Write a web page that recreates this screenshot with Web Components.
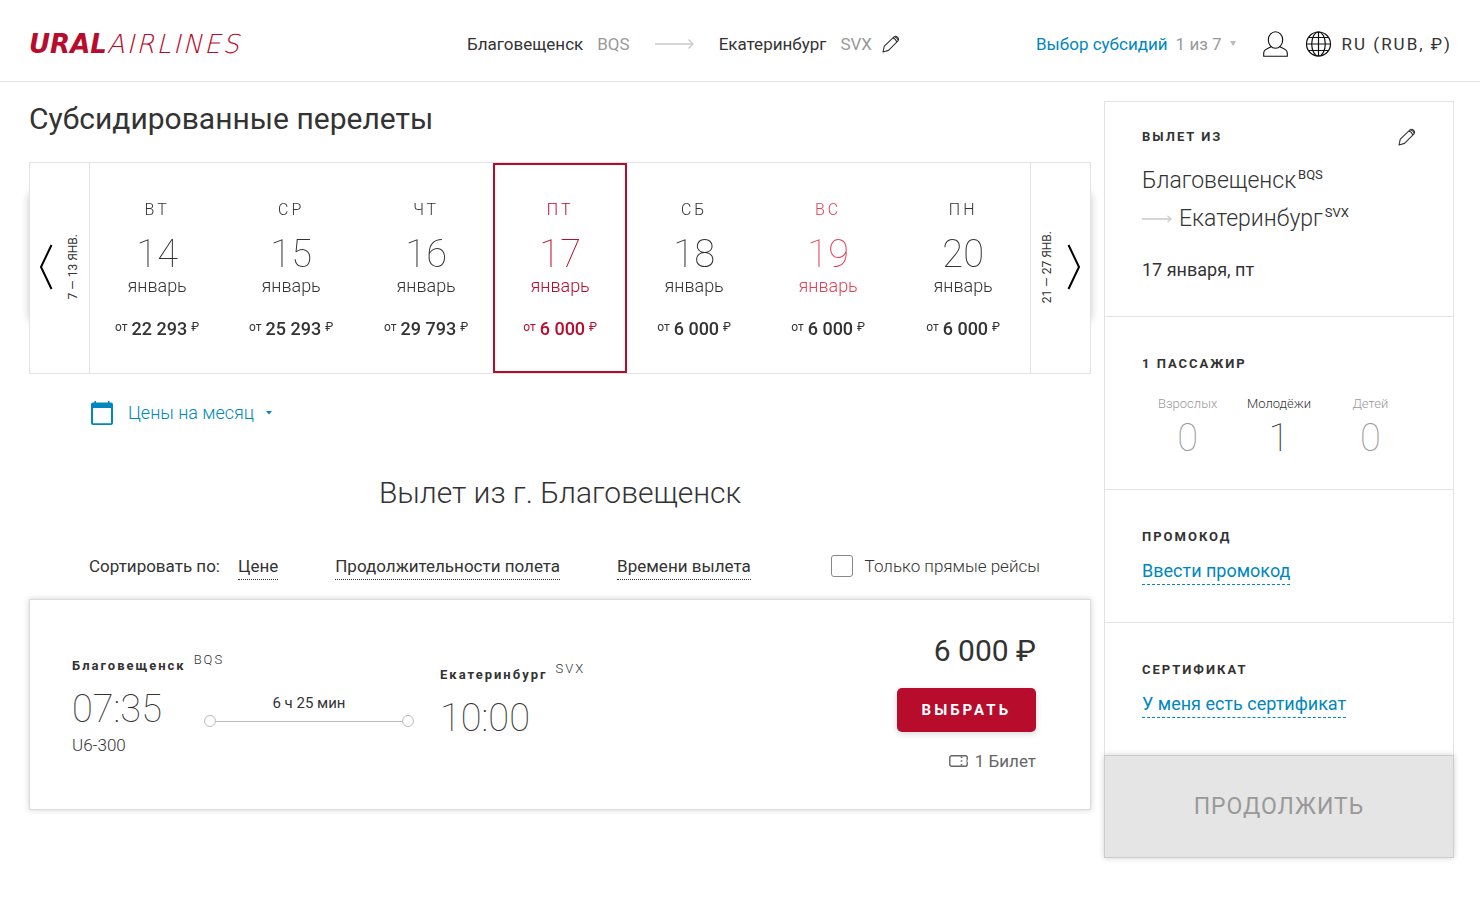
<!DOCTYPE html>
<html lang="ru">
<head>
<meta charset="utf-8">
<meta name="viewport" content="width=device-width, initial-scale=1">
<title>Субсидированные перелеты — Ural Airlines</title>
<style>
  :root {
    --ink: #333;
    --muted: #999;
    --line: #e3e3e3;
    --brand: #b80c2d;
    --holiday: #e04358;
    --link: #0087be;
  }
  body { margin: 0; background: #fff; color: var(--ink); font: 400 18px/24px Roboto, "Liberation Sans", sans-serif; }
</style>
</head>
<body>
<ua-booking-page></ua-booking-page>

<script>
const BASE = `
  *, *::before, *::after { box-sizing: border-box; }
  button { font: inherit; color: inherit; letter-spacing: inherit; background: none; border: 0; padding: 0; margin: 0; cursor: pointer; text-align: inherit; }
  a { color: inherit; text-decoration: none; }
  h1, h2, h3, p { margin: 0; font-weight: inherit; font-size: inherit; }
`;

function define(name, css, html) {
  customElements.define(name, class extends HTMLElement {
    constructor() {
      super();
      const root = this.attachShadow({ mode: 'open' });
      const markup = typeof html === 'function' ? html(this) : html;
      root.innerHTML = `<style>${BASE}${css}</style>${markup}`;
    }
  });
}

const ICONS = {
  pencil: [18, 18, `<g fill="none" stroke="#333" stroke-width="1.1" stroke-linejoin="round"><path d="M1 17 2.3 11.2 12 1.9Q13.3.6 15 1.8L16.1 2.9Q17.2 4.4 16 5.9L6.5 15.4Z"/><path d="M11 3Q13.6 3.6 14.8 7"/><path d="M12.4 1.7Q15 2.3 16.3 5.4"/></g>`],
  arrow: [39, 12, `<g fill="none" stroke="#c8c8c8"><path stroke-width="1.6" d="M0 6H38"/><path stroke-width="1.3" d="M33.5 1.5 38 6 33.5 10.5"/></g>`],
  arrowSmall: [30, 10, `<g fill="none" stroke="#ccc"><path stroke-width="1.6" d="M0 5H29"/><path stroke-width="1.2" d="M25.5 1.8 29 5 25.5 8.2"/></g>`],
  user: [25, 26, `<g fill="none" stroke="#111" stroke-width="1.1"><ellipse cx="12.5" cy="9" rx="7.2" ry="8.2"/><path d="M8.3 15.8C4.5 17.8.7 18.2.7 22V25.2H24.3V22C24.3 18.2 20.5 17.8 16.7 15.8"/></g>`],
  globe: [25, 26, `<g fill="none" stroke="#111" stroke-width="1.2"><circle cx="12.5" cy="13" r="12"/><ellipse cx="12.5" cy="13" rx="6.8" ry="12"/><path d="M12.5 1V25M.5 13H24.5M2.8 6.5H22.2M2.8 19.5H22.2"/></g>`],
  prev: [14, 46, `<path d="M12.5 1 2 23 12.5 45" fill="none" stroke="#000" stroke-width="2"/>`],
  next: [14, 46, `<path d="M1.5 1 12 23 1.5 45" fill="none" stroke="#000" stroke-width="2"/>`],
  calendar: [22, 24, `<path fill="#0087be" d="M3.5 0H5V1.5H17V0H18.5V1.5H20Q22 1.5 22 3.5V22Q22 24 20 24H2Q0 24 0 22V3.5Q0 1.5 2 1.5H3.5ZM2 7V22.3H20V7Z"/>`],
  caretBlue: [6, 4, `<path fill="#0087be" d="M0 0H6L3 3.5Z"/>`],
  caretGray: [6, 6, `<path fill="#bbb" d="M0 0H6L3 5Z"/>`],
  ticket: [19, 12, `<rect x=".8" y=".8" width="17.4" height="10.4" rx="1.8" fill="none" stroke="#666" stroke-width="1.4"/><path stroke="#666" stroke-width="1.6" d="M12.5 1.500V3M12.5 5.200V6.800M12.5 9V10.500"/><path fill="#fff" d="M17 4.8H19V7.2H17Z"/><path fill="none" stroke="#666" d="M18.5 4.5Q16.8 6 18.5 7.5"/>`]
};

define('ua-icon', `:host { display: inline-flex; flex: none; } svg { display: block; overflow: visible; }`, el => {
  const [w, h, body] = ICONS[el.getAttribute('name')];
  return `<svg width="${w}" height="${h}" viewBox="0 0 ${w} ${h}" aria-hidden="true">${body}</svg>`;
});

define('ua-logo', `
  :host { display: block; }
  a { display: flex; align-items: baseline; color: var(--brand); font: italic 26px/32px "DejaVu Sans", sans-serif; white-space: nowrap; }
  b { font-weight: 700; }
  span { font-family: "DejaVu Sans Light", "DejaVu Sans", sans-serif; font-weight: 200; letter-spacing: 2px; }
`, `<a href="#" aria-label="Ural Airlines"><b>URAL</b><span>AIRLINES</span></a>`);

define('ua-header', `
  :host { display: block; border-bottom: 1px solid var(--line); }
  header { display: flex; align-items: center; min-height: 81px; padding: 6px 28px 0 29px; white-space: nowrap; font-size: 17px; }
  ua-logo { flex: 1; }
  .route { display: flex; align-items: center; }
  .code { color: var(--muted); margin-left: 14px; }
  .route ua-icon { margin: 0 25px; }
  .route button { margin-left: 10px; display: flex; }
  .route button ua-icon { margin: 0; }
  .tools { display: flex; align-items: center; margin-left: 136px; }
  .subsidy { display: flex; align-items: center; gap: 8px; color: var(--muted); }
  .subsidy a { color: var(--link); }
  .user { display: flex; margin: 0 18px 0 27px; }
  .lang { display: flex; align-items: center; gap: 11px; letter-spacing: 2px; }
`, `
  <header>
    <ua-logo></ua-logo>
    <div class="route">
      <span>Благовещенск</span><span class="code">BQS</span>
      <ua-icon name="arrow"></ua-icon>
      <span>Екатеринбург</span><span class="code">SVX</span>
      <button type="button" aria-label="Изменить маршрут"><ua-icon name="pencil"></ua-icon></button>
    </div>
    <div class="tools">
      <div class="subsidy"><a href="#">Выбор субсидий</a><span>1 из 7</span><ua-icon name="caretGray"></ua-icon></div>
      <button class="user" type="button" aria-label="Личный кабинет"><ua-icon name="user"></ua-icon></button>
      <button class="lang" type="button"><ua-icon name="globe"></ua-icon><span>RU (RUB, ₽)</span></button>
    </div>
  </header>`);

define('ua-day', `
  :host { display: block; flex: 1 1 0; min-width: 0; will-change: transform; }
  :host([selected]) { color: var(--brand); }
  button { display: flex; flex-direction: column; align-items: center; width: 100%; height: 100%; padding: 35px 0 30px; border: 2px solid transparent; white-space: nowrap; font-weight: 300; line-height: 20px; }
  :host([selected]) button { border-color: var(--brand); }
  :host([holiday]) .date { color: var(--holiday); }
  .date { display: flex; flex-direction: column; align-items: center; }
  .dow { font-size: 16px; letter-spacing: 3px; }
  .num { margin: 14px 0 2px; font-weight: 100; font-size: 38px; line-height: 40px; }
  .price { display: flex; gap: 4px; margin-top: 21px; font-weight: 500; line-height: 24px; }
  small { font-size: 12px; line-height: 20px; font-weight: 400; }
`, el => `
  <button type="button" aria-pressed="${el.hasAttribute('selected')}">
    <span class="date"><span class="dow">${el.getAttribute('dow')}</span><span class="num">${el.getAttribute('num')}</span><span>январь</span></span>
    <span class="price"><small>от</small><slot></slot><small>₽</small></span>
  </button>`);

define('ua-week-nav', `
  :host { display: block; flex: 0 0 60px; background: #fff; }
  button { display: flex; align-items: center; justify-content: center; gap: 12px; width: 100%; height: 100%; padding-bottom: 2px; font-size: 12px; line-height: 16px; }
  :host([side="prev"]) button { border-right: 1px solid var(--line); }
  :host([side="next"]) button { border-left: 1px solid var(--line); flex-direction: row-reverse; }
  span { writing-mode: vertical-rl; rotate: 180deg; white-space: nowrap; }
`, el => `<button type="button"><ua-icon name="${el.getAttribute('side')}"></ua-icon><span><slot></slot></span></button>`);

define('ua-week', `
  :host { display: block; position: relative; isolation: isolate; }
  :host::before { content: ""; position: absolute; inset: 32px 0 54px; z-index: -1; box-shadow: 0 0 8px rgba(0,0,0,.22); }
  .box { display: flex; border: 1px solid var(--line); background: #fff; }
`, `
  <div class="box">
    <ua-week-nav side="prev">7 — 13 ЯНВ.</ua-week-nav>
    <ua-day dow="ВТ" num="14">22 293</ua-day>
    <ua-day dow="СР" num="15">25 293</ua-day>
    <ua-day dow="ЧТ" num="16">29 793</ua-day>
    <ua-day dow="ПТ" num="17" selected>6 000</ua-day>
    <ua-day dow="СБ" num="18">6 000</ua-day>
    <ua-day dow="ВС" num="19" holiday>6 000</ua-day>
    <ua-day dow="ПН" num="20">6 000</ua-day>
    <ua-week-nav side="next">21 — 27 ЯНВ.</ua-week-nav>
  </div>`);

define('ua-sort-bar', `
  :host { display: flex; align-items: flex-start; padding: 0 51px 0 60px; white-space: nowrap; font-size: 17px; }
  .by { display: flex; align-items: flex-start; gap: 57px; }
  .by span { margin-right: -39px; }
  .by button { padding-bottom: 1px; border-bottom: 1px dotted var(--ink); }
  label { display: flex; align-items: center; gap: 12px; margin-left: auto; font-weight: 300; }
  input { appearance: none; width: 22px; height: 22px; margin: 0; border: 1px solid #888; border-radius: 3px; }
`, `
  <div class="by">
    <span>Сортировать по:</span>
    <button type="button">Цене</button>
    <button type="button">Продолжительности полета</button>
    <button type="button">Времени вылета</button>
  </div>
  <label><input type="checkbox">Только прямые рейсы</label>`);

define('ua-stop', `
  :host { display: block; white-space: nowrap; }
  .city { display: flex; margin-bottom: 6px; font-size: 13px; font-weight: 700; line-height: 20px; letter-spacing: 2px; }
  .code { font-weight: 300; line-height: 8px; margin-left: 8px; }
  time { display: block; font-weight: 100; font-size: 38px; line-height: 54px; }
  ::slotted(*) { display: block; font-size: 17px; font-weight: 300; line-height: 18px; }
`, el => `
  <div class="city">${el.getAttribute('city')}<span class="code">${el.getAttribute('code')}</span></div>
  <time>${el.getAttribute('time')}</time>
  <slot></slot>`);

define('ua-flight-card', `
  :host { display: flex; align-items: center; padding: 31px 54px 30px 42px; border: 1px solid #ddd; background: #fff; box-shadow: 0 0 6px rgba(0,0,0,.18); }
  .from { flex: 0 0 132px; min-width: 0; }
  .leg { flex: 0 0 210px; margin-right: 26px; padding-top: 10px; text-align: center; font-size: 15px; line-height: 20px; }
  .track { display: flex; align-items: center; margin-top: 2px; }
  .track i { flex: none; width: 12px; height: 12px; border: 1px solid #bbb; border-radius: 50%; }
  .track::before { content: ""; order: 1; flex: 1; height: 1px; background: #bbb; }
  .track i:last-child { order: 2; }
  .offer { display: flex; flex-direction: column; align-items: flex-end; margin-left: auto; padding-bottom: 8px; }
  .price { font-size: 30px; line-height: 40px; }
  .offer button { margin: 17px 0 19px; padding: 12px 25px; border-radius: 5px; background: var(--brand); color: #fff; font-size: 15px; font-weight: 700; line-height: 20px; letter-spacing: 3px; box-shadow: 0 2px 6px rgba(0,0,0,.15); }
  .left { display: flex; align-items: center; gap: 7px; color: #666; font-size: 17px; line-height: 20px; }
`, `
  <ua-stop class="from" city="Благовещенск" code="BQS" time="07:35"><span>U6-300</span></ua-stop>
  <div class="leg">6 ч 25 мин<div class="track"><i></i><i></i></div></div>
  <ua-stop city="Екатеринбург" code="SVX" time="10:00"></ua-stop>
  <div class="offer">
    <div class="price">6 000 ₽</div>
    <button type="button">ВЫБРАТЬ</button>
    <div class="left"><ua-icon name="ticket"></ua-icon>1 Билет</div>
  </div>`);

define('ua-panel-section', `
  :host { display: block; padding: 39px 37px 37px; border: 1px solid var(--line); border-bottom: 0; }
  .head { display: flex; justify-content: space-between; align-items: center; height: 16px; }
  h3 { font-size: 13px; font-weight: 700; line-height: 16px; letter-spacing: 2px; }
`, el => `<div class="head"><h3>${el.getAttribute('heading')}</h3><slot name="action"></slot></div><slot></slot>`);

define('ua-passengers', `
  :host { display: flex; margin-top: 24px; text-align: center; font-weight: 300; }
  div { flex: 1; font-size: 13px; line-height: 16px; color: var(--muted); }
  div.on { color: var(--ink); }
  b { display: block; margin-top: 6px; font-weight: 100; font-size: 38px; line-height: 40px; }
`, `
  <div>Взрослых<b>0</b></div>
  <div class="on">Молодёжи<b>1</b></div>
  <div>Детей<b>0</b></div>`);

define('ua-side-panel', `
  :host { display: block; }
  .trip { padding: 27px 37px 34px; }
  .pax { padding-bottom: 31px; }
  .city { display: flex; align-items: flex-start; font-size: 23px; line-height: 38px; font-weight: 300; white-space: nowrap; }
  .city:first-of-type { margin-top: 17px; }
  .city ua-icon { margin: 14px 7px 0 0; }
  .city small { margin-left: 2px; font-size: 13px; line-height: 26px; font-weight: 400; }
  .date { margin-top: 20px; }
  .link { display: inline-block; margin-top: 14px; padding-bottom: 1px; border-bottom: 1px dashed var(--link); color: var(--link); vertical-align: top; }
  .go { display: block; width: 100%; padding: 35px 0 34px; border: 1px solid #ccc; background: #e5e5e5; color: var(--muted); font-size: 23px; line-height: 32px; letter-spacing: 1px; text-align: center; box-shadow: 0 0 6px rgba(0,0,0,.18); }
  .edit { display: flex; }
`, `
  <ua-panel-section class="trip" heading="ВЫЛЕТ ИЗ">
    <button class="edit" slot="action" type="button" aria-label="Изменить"><ua-icon name="pencil"></ua-icon></button>
    <div class="city">Благовещенск<small>BQS</small></div>
    <div class="city"><ua-icon name="arrowSmall"></ua-icon>Екатеринбург<small>SVX</small></div>
    <p class="date">17 января, пт</p>
  </ua-panel-section>
  <ua-panel-section class="pax" heading="1 ПАССАЖИР"><ua-passengers></ua-passengers></ua-panel-section>
  <ua-panel-section heading="ПРОМОКОД"><a class="link" href="#">Ввести промокод</a></ua-panel-section>
  <ua-panel-section heading="СЕРТИФИКАТ"><a class="link" href="#">У меня есть сертификат</a></ua-panel-section>
  <button class="go" type="button" disabled>ПРОДОЛЖИТЬ</button>`);

define('ua-booking-page', `
  :host { display: block; }
  main { display: grid; grid-template-columns: minmax(0, 1fr) 350px; gap: 13px; align-items: start; padding: 19px 26px 52px 29px; }
  h1 { font-size: 30px; line-height: 36px; margin-bottom: 25px; }
  .month { display: flex; align-items: center; margin: 27px 0 0 62px; color: var(--link); font-weight: 300; }
  .month ua-icon:first-child { margin-right: 15px; }
  .month ua-icon:last-child { margin-left: 12px; }
  h2 { margin: 48px 0 41px; font-size: 30px; font-weight: 300; line-height: 40px; text-align: center; }
  ua-sort-bar { margin-bottom: 19px; }
`, `
  <ua-header></ua-header>
  <main>
    <section>
      <h1>Субсидированные перелеты</h1>
      <ua-week></ua-week>
      <button class="month" type="button"><ua-icon name="calendar"></ua-icon>Цены на месяц<ua-icon name="caretBlue"></ua-icon></button>
      <h2>Вылет из г. Благовещенск</h2>
      <ua-sort-bar></ua-sort-bar>
      <ua-flight-card></ua-flight-card>
    </section>
    <ua-side-panel></ua-side-panel>
  </main>`);
</script>
</body>
</html>
